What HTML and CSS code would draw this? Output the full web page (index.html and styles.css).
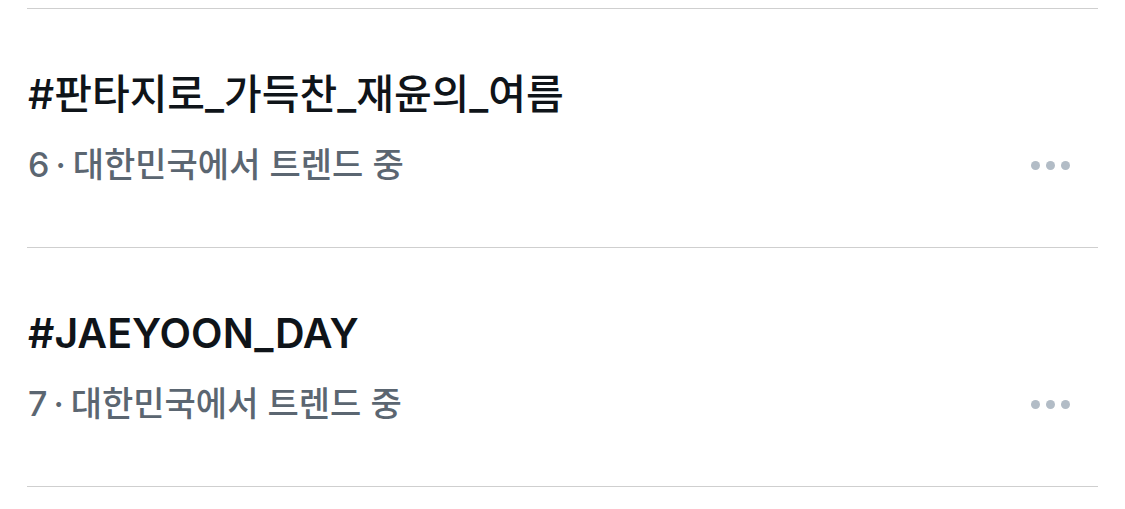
FILE: index.html
```html
<!DOCTYPE html>
<html lang="ko">
<head>
<meta charset="utf-8">
<link rel="stylesheet" href="styles.css">
</head>
<body>
<div class="list">
  <div class="trend">
    <div class="text">
      <div class="title">#판타지로_가득찬_재윤의_여름</div>
      <div class="meta">6<span class="dot">·</span>대한민국에서 트렌드 중</div>
    </div>
    <div class="more"><span></span><span></span><span></span></div>
  </div>
  <div class="trend">
    <div class="text">
      <div class="title latin">#JAEYOON_DAY</div>
      <div class="meta">7<span class="dot">·</span>대한민국에서 트렌드 중</div>
    </div>
    <div class="more"><span></span><span></span><span></span></div>
  </div>
</div>
</body>
</html>
```

FILE: styles.css
```css
html, body {
  margin: 0;
  padding: 0;
  background: #ffffff;
}
body {
  font-family: "Inter", "Noto Sans CJK KR", sans-serif;
}
.list {
  margin: 8px 27px 0 27px;
  border-top: 1px solid #cfcfcf;
}
.trend {
  height: 238px;
  border-bottom: 1px solid #cfcfcf;
  display: flex;
  align-items: flex-start;
  justify-content: space-between;
}
.text {
  padding-top: 61px;
  padding-left: 1px;
}
.title {
  font-size: 41px;
  line-height: 48px;
  font-weight: 500;
  color: #0f1419;
}
.title.latin {
  font-weight: 600;
}
.meta {
  margin-top: 27px;
  font-size: 34px;
  line-height: 40px;
  font-weight: 500;
  color: #5b6671;
}
.dot {
  margin: 0 7px 0 6px;
}
.more {
  display: flex;
  gap: 6px;
  margin-top: 152px;
  margin-right: 28px;
}
.more span {
  width: 9px;
  height: 9px;
  border-radius: 50%;
  background: #b2bcc6;
}
```
